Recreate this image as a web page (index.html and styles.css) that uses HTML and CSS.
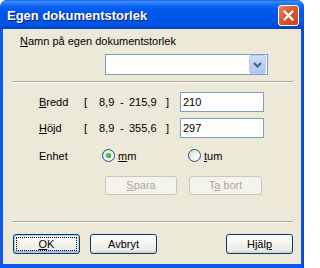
FILE: index.html
```html
<!DOCTYPE html>
<html lang="sv">
<head>
<meta charset="utf-8">
<title>Egen dokumentstorlek</title>
<link rel="stylesheet" href="styles.css">
</head>
<body>
<div class="window">
  <div class="titlebar">
    <span class="title">Egen dokumentstorlek</span>
    <span class="close"><svg width="11" height="11" viewBox="0 0 11 11"><path d="M1.5 1.5 L9.5 9.5 M9.5 1.5 L1.5 9.5" stroke="#fff" stroke-width="2.2" stroke-linecap="square"/></svg></span>
  </div>
  <div class="client">
    <div class="name-label"><u>N</u>amn på egen dokumentstorlek</div>
    <div class="combo">
      <span class="combo-btn"><svg width="9" height="6" viewBox="0 0 9 6"><path d="M1 1 L4.5 4.5 L8 1" fill="none" stroke="#4D6185" stroke-width="2"/></svg></span>
    </div>
    <div class="sep"></div>
    <div class="row">
      <span class="lbl"><u>B</u>redd</span>
      <span class="br">[</span><span class="min">8,9</span><span class="dash">-</span><span class="max">215,9</span><span class="br2">]</span>
      <span class="input">210</span>
    </div>
    <div class="row row2">
      <span class="lbl"><u>H</u>öjd</span>
      <span class="br">[</span><span class="min">8,9</span><span class="dash">-</span><span class="max">355,6</span><span class="br2">]</span>
      <span class="input">297</span>
    </div>
    <div class="unit-row">
      <span class="lbl">Enhet</span>
      <span class="radio checked"><span class="dot"></span></span><span class="rlabel"><u>m</u>m</span>
      <span class="radio second"></span><span class="rlabel"><u>t</u>um</span>
    </div>
    <div class="action-row">
      <span class="btn disabled spara"><span><u>S</u>para</span></span>
      <span class="btn disabled tabort"><span>T<u>a</u> bort</span></span>
    </div>
    <div class="sep sep2"></div>
    <div class="bottom-row">
      <span class="btn default"><span class="focus"><span><u>O</u>K</span></span></span>
      <span class="btn avbryt"><span>Avbryt</span></span>
      <span class="btn hjalp"><span>Hjäl<u>p</u></span></span>
    </div>
  </div>
</div>
</body>
</html>
```
FILE: styles.css
```css
html, body {
  margin: 0;
  padding: 0;
  background: #ffffff;
}
.window {
  width: 304px;
  height: 268px;
  box-sizing: border-box;
  display: flex;
  flex-direction: column;
  background: linear-gradient(to right, #0B47D6 0, #1662F0 1px, #0C5AEC 2px, #0C5AEC 301px, #0846D2 303px);
  border-radius: 7px 7px 0 0;
  overflow: hidden;
  font-family: "Liberation Sans", Arial, sans-serif;
  font-size: 11px;
  color: #000;
}
.titlebar {
  height: 29px;
  flex: none;
  display: flex;
  align-items: center;
  justify-content: space-between;
  padding: 0 3px 0 7px;
  background: linear-gradient(to bottom, #0A4FD8 0, #3D8EF8 1px, #2A7DF8 3px, #0E66F2 6px, #0058EE 10px, #0056E8 18px, #0055E4 24px, #0048D2 27px, #003FC4 29px);
}
.title {
  color: #fff;
  font-family: "Liberation Sans", Arial, sans-serif;
  font-weight: bold;
  font-size: 13px;
  text-shadow: 1px 1px 0 #0A1E80;
  margin-top: 1px;
}
.close {
  width: 19px;
  height: 19px;
  border: 1px solid #fff;
  border-radius: 3px;
  background: linear-gradient(135deg, #E8876A 0, #D9582F 45%, #C8431F 100%);
  display: flex;
  align-items: center;
  justify-content: center;
  margin-top: 2px;
  margin-right: 2px;
}
.client {
  flex: 1;
  margin: 0 3px 4px 3px;
  background: #ECE9D8;
  display: flex;
  flex-direction: column;
}
u {
  text-decoration: underline;
  text-underline-offset: 1px;
}
.name-label {
  margin: 6px 0 0 17px;
  line-height: 13px;
}
.combo {
  margin: 6px 0 0 102px;
  width: 160px;
  height: 19px;
  border: 1px solid #7F9DB9;
  background: #fff;
  display: flex;
  justify-content: flex-end;
  align-items: center;
  padding-right: 1px;
}
.combo-btn {
  width: 15px;
  height: 17px;
  border: 1px solid #B9CDF6;
  border-radius: 2px;
  background: linear-gradient(to bottom, #D2DEFB 0, #BCCEF8 50%, #AFC4F5 100%);
  display: flex;
  align-items: center;
  justify-content: center;
}
.sep {
  margin: 6px 8px 0 9px;
  border-top: 1px solid #ACA899;
  border-bottom: 1px solid #FFFFFF;
  height: 0;
}
.row {
  display: flex;
  align-items: center;
  margin-top: 9px;
  height: 20px;
}
.row2 {
  margin-top: 6px;
}
.lbl {
  margin-left: 36px;
  width: 45px;
}
.br { width: 15px; }
.min { width: 21px; }
.dash { width: 9px; }
.max { width: 37px; }
.br2 { width: 14px; }
.input {
  box-sizing: border-box;
  width: 84px;
  height: 20px;
  border: 1px solid #7F9DB9;
  background: #fff;
  padding: 0 0 0 2px;
  line-height: 18px;
}
.unit-row {
  display: flex;
  align-items: center;
  margin-top: 11px;
  height: 13px;
}
.unit-row .lbl {
  width: 63px;
}
.radio {
  box-sizing: border-box;
  width: 13px;
  height: 13px;
  border: 1px solid #1C5180;
  border-radius: 50%;
  background: linear-gradient(135deg, #DCDCD5 0, #F4F4F0 60%, #FFFFFF 100%);
  display: flex;
  align-items: center;
  justify-content: center;
  margin-right: 3px;
}
.radio .dot {
  width: 5px;
  height: 5px;
  border-radius: 50%;
  background: radial-gradient(circle at 40% 40%, #6FDB6F 0, #21A121 70%);
}
.rlabel { width: 70px; }
.action-row {
  display: flex;
  margin-top: 14px;
  margin-left: 102px;
  gap: 12px;
}
.btn {
  box-sizing: border-box;
  height: 19px;
  border: 1px solid #003C74;
  border-radius: 3px;
  background: linear-gradient(to bottom, #FFFFFF 0, #F6F5F1 40%, #ECEBE5 85%, #D6D0C5 100%);
  display: flex;
  align-items: center;
  justify-content: center;
  line-height: 13px;
  white-space: pre;
}
.btn.disabled {
  border-color: #C9C7BA;
  background: #F5F4EA;
  color: #ACA899;
}
.spara { width: 72px; }
.tabort { width: 73px; }
.sep2 {
  margin-top: 26px;
}
.bottom-row {
  display: flex;
  margin: 11px 0 0 10px;
}
.bottom-row .btn {
  width: 67px;
  height: 20px;
}
.btn.default {
  box-shadow: inset 0 0 0 1px #B5CDF2, inset 0 -1px 0 1px #97B5E8;
  padding: 2px;
}
.focus {
  flex: 1;
  align-self: stretch;
  display: flex;
  align-items: center;
  justify-content: center;
  outline: 1px dotted #000;
  outline-offset: -1px;
}
.avbryt { margin-left: 10px; }
.hjalp { margin-left: 69px; }
```
